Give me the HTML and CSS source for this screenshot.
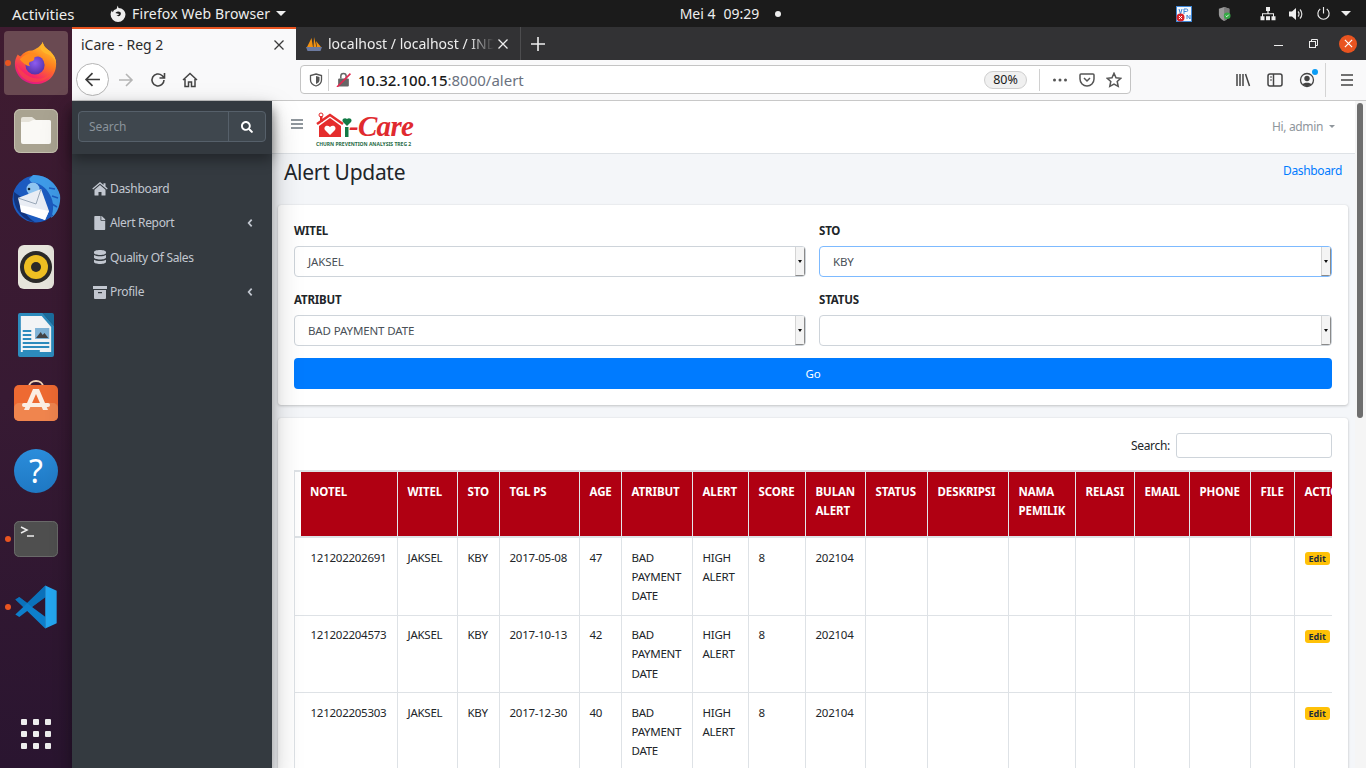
FILE: index.html
```html
<!DOCTYPE html>
<html lang="id">
<head>
<meta charset="utf-8">
<title>iCare - Reg 2</title>
<link rel="stylesheet" href="styles.css">
</head>
<body>
<header class="topbar">
  <div class="top-left">
    <span class="activities">Activities</span>
    <span class="app-menu">
      <svg class="ff-mono" viewBox="0 0 16 16"><path fill="#eee" d="M8 .5c.6 1 .8 1.600.9 2.300C12.700 3 15.500 5.500 15.500 9A7 7 0 0 1 1.500 9c0-1.500.5-3 1.400-4.100 0 1 .3 1.600.8 2C4 5 5.500 4 7 3.700 7.500 2.800 8 1.800 8 .5zM8.500 6A3 3 0 0 0 6 7.500c1 .7 2.500.3 3.500 1-.3.9-1.200 1.300-2.300 1 .5 1 2 1.400 3 .7 1-.8 1.300-2.300.6-3.300-.5-.6-1.300-.9-2.300-.9z"/></svg>
      <span class="app-name">Firefox Web Browser</span>
      <i class="caret-w"></i>
    </span>
  </div>
  <div class="top-center"><span>Mei 4</span><span>09:29</span><i class="rec-dot"></i></div>
  <div class="top-right">
    <svg class="tray vpn" viewBox="0 0 16 16"><rect width="16" height="16" fill="#f4f8fd"/><rect x=".5" y=".5" width="15" height="15" fill="none" stroke="#3d86d6"/><path d="M3 3l1.500 5L6 3M8 8V3h2.500a1.200 1.200 0 0 1 0 2.500H8M11 13V9l3 4V9" fill="none" stroke="#3d86d6" stroke-width="1"/><circle cx="4.500" cy="11.500" r="4" fill="#d8232a"/><path d="M3 10l3 3M6 10l-3 3" stroke="#fff" stroke-width="1"/></svg>
    <svg class="tray shield" viewBox="0 0 16 16"><path d="M7 0l6 2v6c0 4-3 6.500-6 8-3-1.500-6-4-6-8V2z" fill="#9a9a9a"/><path d="M7 0l6 2v6c0 4-3 6.500-6 8z" fill="#7d7d7d"/><circle cx="10.500" cy="10" r="3.800" fill="#35a845"/><path d="M8.800 10l1.200 1.200 2.200-2.400" stroke="#fff" fill="none"/></svg>
    <svg class="tray net" viewBox="0 0 16 16"><path fill="#eee" d="M6 1h4v4H8.600v2.200H14v3h1.500v4h-4v-4H13V8.300H3v1.900h1.500v4h-4v-4H2v-3h5.400V5H6z"/><path fill="#eee" d="M6 10.200h4v4H6z"/></svg>
    <svg class="tray vol" viewBox="0 0 16 16"><path fill="#eee" d="M1 5.500h3L8 2v12L4 10.500H1z"/><path d="M10 5.500a3.500 3.500 0 0 1 0 5M12 3.500a6.500 6.500 0 0 1 0 9" fill="none" stroke="#ddd" stroke-width="1.200"/></svg>
    <svg class="tray pow" viewBox="0 0 16 16"><path d="M8 1v7M4.500 3.200a6 6 0 1 0 7 0" fill="none" stroke="#eee" stroke-width="1.200"/></svg>
    <i class="caret-w"></i>
  </div>
</header>

<div class="desktop">
  <nav class="dock">
    <div class="slot active-tile">
      <i class="run-dot"></i>
      <svg class="ic46" viewBox="0 0 48 48">
        <defs>
          <linearGradient id="fxa" x1=".8" y1="0" x2=".3" y2="1"><stop offset="0" stop-color="#ffd12e"/><stop offset=".45" stop-color="#ff7a1f"/><stop offset=".8" stop-color="#f5256a"/><stop offset="1" stop-color="#d81b8a"/></linearGradient>
          <radialGradient id="fxb" cx=".5" cy=".4" r=".7"><stop offset="0" stop-color="#8d5cf0"/><stop offset="1" stop-color="#4c2a9e"/></radialGradient>
        </defs>
        <path fill="url(#fxa)" d="M31 2c1 5 4 7 8 10 4 4 6 8 6 13 0 12-9 21-21 21S2 37 2 25c0-4 1-7 3-10 1 1 2 2 3 2 3-4 7-6 12-6 4-2 9-4 11-9z"/>
        <path fill="#ffb52a" d="M31 2c1 5 4 7 8 10 4 4 6 8 6 13-1-5-4-8-8-10-4-1-7-3-8-6 0-2 1-5 2-7z"/>
        <circle cx="23" cy="26" r="10" fill="url(#fxb)"/>
        <path fill="#ff8a1f" d="M7 20c4-4 9-7 15-6 3 .5 6 2 8 4-3-1-6-1-8 .5 1 2-1 3.500-3 4-3 .5-3 3-1 5-5-1-8-4-11-7.500z"/>
        <path fill="#ff5a2c" d="M4 26c0 9 8 18 19 18 9 0 16-6 18-12-4 6-10 9-17 8-8-1-14-6-20-14z" opacity=".45"/>
      </svg>
    </div>
    <div class="slot">
      <svg class="ic44" viewBox="0 0 44 44"><rect width="44" height="44" rx="6" fill="#a9a391"/><rect x=".5" y=".5" width="43" height="43" rx="6" fill="none" stroke="#c4bfae"/><path fill="#e6e3da" d="M7 10a2 2 0 0 1 2-2h9l4 3h13a2 2 0 0 1 2 2v2H7z"/><path fill="#faf9f6" d="M7 13h8l4-2h16a2 2 0 0 1 2 2v20a2 2 0 0 1-2 2H9a2 2 0 0 1-2-2z"/></svg>
    </div>
    <div class="slot">
      <svg class="ic50" viewBox="0 0 50 50"><circle cx="25" cy="25" r="23.500" fill="#1c5bc0"/><path fill="#3f9be8" d="M22 1c12-1 24 8 27 20 1 8-2 18-9 23 3-8 3-16-1-23C35 13 29 9 20 8l-2-3z"/><path fill="#12357f" d="M3 18C1 30 8 45 25 49c-10-6-15-15-15-26z"/><path d="M38 14l6 1M41 22l6 2M41 30l5 3M37 38l5 4" stroke="#1c5bc0" stroke-width="1.500"/><circle cx="22" cy="15" r="6.500" fill="#8fc5f0"/><circle cx="18" cy="15" r="1.300" fill="#123"/><path fill="#e9edf4" d="M7 24l23-9 8 22-4 9-24-10z"/><path fill="#fff" d="M9 31l29 6-4 9-24-8z"/><path d="M7 24l18 6 5-15" fill="none" stroke="#9aa8b8"/></svg>
    </div>
    <div class="slot">
      <svg class="ic44" viewBox="0 0 44 44"><rect x="4" width="36" height="44" rx="6" fill="#e7e5dc"/><circle cx="22" cy="22" r="16" fill="#2b2a28"/><circle cx="22" cy="22" r="12" fill="#eebf22"/><circle cx="22" cy="22" r="5" fill="#2b2a28"/></svg>
    </div>
    <div class="slot">
      <svg class="writer" viewBox="4 0 38 44" preserveAspectRatio="none"><path fill="#1b6e9e" d="M30 0h10a2 2 0 0 1 2 2v11z"/><path fill="#2c8bbd" d="M6 0h24l12 13v29a2 2 0 0 1-2 2H6a2 2 0 0 1-2-2V2a2 2 0 0 1 2-2z"/><path fill="#f2f4f6" d="M7 3h22l10 11v25H7z"/><path stroke="#2c8bbd" stroke-width="2" d="M9 18h9M9 22h9M9 26h9M9 30h28M9 34h28M9 38h18"/><rect x="22" y="15" width="15" height="11" fill="#7fb3d6"/><path fill="#444" d="M23 25l5-6 2 3 2-2 4 5z"/></svg>
    </div>
    <div class="slot">
      <svg class="software" viewBox="0 0 44 44"><path d="M15 8c0-8 14-8 14 0" fill="none" stroke="#f1d3b4" stroke-width="2"/><rect y="6" width="44" height="36" rx="5" fill="#ee6a32"/><rect y="24" width="44" height="18" rx="5" fill="#f0854e"/><path fill="#fbeee4" d="M19 10h6l9 21h-5l-7-16-7 16h-5z"/><rect x="8" y="24" width="28" height="4" rx="2" fill="#fbeee4"/></svg>
    </div>
    <div class="slot">
      <div class="help-ball">?</div>
    </div>
    <div class="slot">
      <i class="run-dot"></i>
      <svg class="ic44" viewBox="0 0 44 36"><rect width="44" height="36" rx="5" fill="#4f4f4f"/><rect x=".5" y=".5" width="43" height="35" rx="5" fill="none" stroke="#6a6a6a"/><path d="M7 6l6 3-6 3M13 15h7" fill="none" stroke="#eee" stroke-width="1.500"/></svg>
    </div>
    <div class="slot">
      <i class="run-dot"></i>
      <svg class="ic44" viewBox="0 0 100 100"><path fill="#0e7fcc" d="M71 1L30 41 12 27l-9 6 18 17L3 67l9 6 18-14 41 40V72L41 50l30-22z"/><path fill="#0a68ad" d="M12 27l-9 6 18 17 9-9zM30 41L71 1v27L41 50z" opacity=".55"/><path fill="#24a7f2" d="M71 1l26 12v74L71 99z"/></svg>
    </div>
    <div class="apps"><i></i><i></i><i></i><i></i><i></i><i></i><i></i><i></i><i></i></div>
  </nav>

  <div class="window">
    <div class="tabbar">
      <div class="tab tab-active"><span class="tab-title">iCare - Reg 2</span><svg class="x" viewBox="0 0 12 12"><path d="M1.500 1.500l9 9M10.500 1.500l-9 9" stroke="#3b3b3b" stroke-width="1.300"/></svg></div>
      <div class="tab tab-idle">
        <svg class="pma" viewBox="0 0 16 16"><path fill="#f29111" d="M1 11L5.500 2 7 11zM7.500 11L8 1l2.500 10zM11 11l-1-6 5 6z"/><path fill="#6c7aa0" d="M0 11h16l-1.500 4H1.500z"/></svg>
        <span class="tab-title-idle">localhost / localhost / INDEX</span>
        <svg class="x" viewBox="0 0 12 12"><path d="M1.500 1.500l9 9M10.500 1.500l-9 9" stroke="#eee" stroke-width="1.300"/></svg>
      </div>
      <svg class="plus" viewBox="0 0 14 14"><path d="M7 0v14M0 7h14" stroke="#eee" stroke-width="1.600"/></svg>
      <div class="winctl">
        <i class="min"></i>
        <svg class="restore" viewBox="0 0 9 9"><path d="M2.500 2V.5h6v6H7" fill="none" stroke="#eee"/><rect x=".5" y="2.500" width="6" height="6" fill="none" stroke="#eee"/></svg>
        <span class="close-btn"><svg viewBox="0 0 10 10"><path d="M1 1l8 8M9 1l-8 8" stroke="#fff" stroke-width="1.300"/></svg></span>
      </div>
    </div>

    <div class="toolbar">
      <span class="back"><svg viewBox="0 0 16 16"><path d="M15 8H2M8 2L2 8l6 6" fill="none" stroke="#3b3b3b" stroke-width="1.600"/></svg></span>
      <svg class="tb" viewBox="0 0 16 16"><path d="M1 8h13M8 2l6 6-6 6" fill="none" stroke="#b5b5b5" stroke-width="1.600"/></svg>
      <svg class="tb" viewBox="0 0 16 16"><path d="M14 8a6 6 0 1 1-2-4.500L14 5.500M14.500 1v5h-5" fill="none" stroke="#444" stroke-width="1.600"/></svg>
      <svg class="tb" viewBox="0 0 16 16"><path d="M1 8l7-6.500L15 8M3 7v7.500h3.500V10h3v4.500H13V7" fill="none" stroke="#444" stroke-width="1.500"/></svg>
      <div class="urlbar">
        <svg class="u-shield" viewBox="0 0 14 14"><path d="M7 1l5.500 1.500V7c0 3-2.500 5-5.500 6C4 12 1.500 10 1.500 7V2.500z" fill="none" stroke="#555" stroke-width="1.300"/><path d="M7 3l3.500 1v3c0 2-1.500 3.300-3.500 4z" fill="#555"/></svg>
        <i class="u-sep"></i>
        <svg class="u-lock" viewBox="0 0 14 14"><rect x="2" y="6" width="10" height="7.500" rx="1" fill="#666"/><path d="M4.500 6V4a2.500 2.500 0 0 1 5 0v2" fill="none" stroke="#666" stroke-width="1.400"/><path d="M1 14L13.500 1.500" stroke="#e22850" stroke-width="1.600"/></svg>
        <span class="url"><b>10.32.100.15</b>:8000/alert</span>
        <span class="zoom-pill">80%</span>
        <i class="u-sep u-sep2"></i>
        <svg class="u-ic dots" viewBox="0 0 16 16"><circle cx="2.500" cy="8" r="1.500"/><circle cx="8" cy="8" r="1.500"/><circle cx="13.500" cy="8" r="1.500"/></svg>
        <svg class="u-ic" viewBox="0 0 16 16"><path d="M1 3a1 1 0 0 1 1-1h12a1 1 0 0 1 1 1v4a7 7 0 0 1-14 0z" fill="none" stroke="#555" stroke-width="1.500"/><path d="M5 6l3 3 3-3" fill="none" stroke="#555" stroke-width="1.500"/></svg>
        <svg class="u-ic" viewBox="0 0 16 16"><path d="M8 1.300l2 4.500 4.800.5-3.600 3.200 1 4.800L8 12l-4.200 2.300 1-4.800L1.200 6.300 6 5.800z" fill="none" stroke="#555" stroke-width="1.500"/></svg>
      </div>
      <div class="tools-right">
        <svg class="tb" viewBox="0 0 16 16"><path d="M2 2v12M5 2v12M8 2v12M10.500 2l4 12" fill="none" stroke="#444" stroke-width="1.500"/></svg>
        <svg class="tb" viewBox="0 0 16 16"><rect x="1" y="2" width="14" height="12" rx="2" fill="none" stroke="#444" stroke-width="1.500"/><path d="M6.500 2v12" stroke="#444" stroke-width="1.500"/><path d="M3 5h2M3 8h2" stroke="#444"/></svg>
        <span class="acct"><svg class="tb" viewBox="0 0 16 16"><circle cx="8" cy="8" r="6.500" fill="none" stroke="#444" stroke-width="1.300"/><circle cx="8" cy="6.500" r="2.700" fill="#444"/><path d="M3.500 12.500c1-2.500 8-2.500 9 0-2 2-7 2-9 0z" fill="#444"/></svg><i class="acct-dot"></i></span>
        <i class="tb-sep"></i>
        <svg class="tb" viewBox="0 0 16 16"><path d="M2 3h12M2 8h12M2 13h12" stroke="#444" stroke-width="1.700"/></svg>
      </div>
    </div>

    <div class="viewport">
      <aside class="sidebar">
        <div class="side-search">
          <div class="side-input"><span class="side-ph">Search</span><span class="side-btn"><svg viewBox="0 0 512 512"><path fill="#fff" d="M505 442.700L405.300 343c-4.500-4.500-10.600-7-17-7H372c27.600-35.300 44-79.700 44-128C416 93.100 322.900 0 208 0S0 93.100 0 208s93.100 208 208 208c48.300 0 92.700-16.400 128-44v16.300c0 6.400 2.500 12.500 7 17l99.700 99.700c9.400 9.400 24.600 9.400 33.900 0l28.300-28.300c9.400-9.400 9.400-24.600.1-34zM208 336c-70.700 0-128-57.200-128-128 0-70.700 57.200-128 128-128 70.700 0 128 57.200 128 128 0 70.700-57.200 128-128 128z"/></svg></span></div>
        </div>
        <ul class="menu">
          <li><svg class="mi" viewBox="0 0 16 14"><path fill="#c2c7d0" d="M8 3L2.500 7.700V13a.5.500 0 0 0 .5.500h3.500V10h3v3.500H13a.5.500 0 0 0 .5-.5V7.700zM15.700 6.500L13.500 4.600V1.200h-2v1.700L8 0 .3 6.500l.8 1L8 1.800l6.900 5.700z"/></svg><span>Dashboard</span></li>
          <li><svg class="mi" viewBox="0 0 16 14"><path fill="#c2c7d0" d="M8.500 4V0H3a.7.700 0 0 0-.7.700v12.600c0 .4.300.7.700.7h9.500a.7.700 0 0 0 .7-.7V4.700H9.200a.7.700 0 0 1-.7-.7zM13.200 3.300L10 .2A.7.700 0 0 0 9.500 0h-.2v3.900h3.900z"/></svg><span>Alert Report</span><svg class="chev" viewBox="0 0 8 12"><path d="M6.500 1L2 6l4.500 5" fill="none" stroke="#c2c7d0" stroke-width="2.600"/></svg></li>
          <li><svg class="mi" viewBox="0 0 16 14"><path fill="#c2c7d0" d="M14 2v1c0 1.100-2.700 2-6 2S2 4.100 2 3V2C2 .9 4.700 0 8 0s6 .9 6 2zM14 5v2.500C14 8.600 11.300 9.500 8 9.500S2 8.600 2 7.500V5c1.300.9 3.600 1.300 6 1.300S12.700 5.900 14 5zM14 9.700V12c0 1.100-2.700 2-6 2s-6-.9-6-2V9.700c1.300.9 3.600 1.300 6 1.300s4.700-.4 6-1.300z"/></svg><span>Quality Of Sales</span></li>
          <li><svg class="mi" viewBox="0 0 16 14"><path fill="#c2c7d0" d="M1 1h14v3H1zM2 5h12v8a1 1 0 0 1-1 1H3a1 1 0 0 1-1-1zm4 2v1.200h4V7z"/></svg><span>Profile</span><svg class="chev" viewBox="0 0 8 12"><path d="M6.500 1L2 6l4.500 5" fill="none" stroke="#c2c7d0" stroke-width="2.600"/></svg></li>
        </ul>
      </aside>

      <main class="main">
        <div class="navbar">
          <svg class="burger" viewBox="0 0 12 10"><path d="M0 1h12M0 5h12M0 9h12" stroke="#6c757d" stroke-width="1.400"/></svg>
          <div class="logo">
            <div class="logo-row">
              <svg class="logo-house" viewBox="0 0 36 27"><path d="M1 12L14 3l13 9" fill="none" stroke="#e52d2d" stroke-width="2.500"/><circle cx="5" cy="3" r="2" fill="none" stroke="#e52d2d"/><path fill="#e52d2d" d="M4 4h2.500v6H4z"/><path fill="#e52d2d" d="M3 14l11-8 11 8v11H3z"/><path fill="#fff" d="M14 23l-5-5c-2-3 2-6 5-3 3-3 7 0 5 3z"/><path fill="#127a45" d="M29 15h3.500v10H29z"/><path fill="#127a45" d="M31 14l-4-4c-2-3 2-5 4-3 2-2 6 0 4 3z"/></svg>
              <span class="logo-text">-Care</span>
            </div>
            <div class="logo-tag">CHURN PREVENTION ANALYSIS TREG 2</div>
          </div>
          <div class="user">Hi, admin<i class="caret-g"></i></div>
        </div>

        <div class="content">
          <div class="head-row">
            <h1>Alert Update</h1>
            <a class="crumb" href="#">Dashboard</a>
          </div>

          <section class="card form-card">
            <div class="form-grid">
              <div class="field"><label>WITEL</label><div class="select"><span>JAKSEL</span><i class="arrow"></i></div></div>
              <div class="field"><label>STO</label><div class="select focus"><span>KBY</span><i class="arrow"></i></div></div>
              <div class="field"><label>ATRIBUT</label><div class="select"><span>BAD PAYMENT DATE</span><i class="arrow"></i></div></div>
              <div class="field"><label>STATUS</label><div class="select"><span></span><i class="arrow"></i></div></div>
            </div>
            <button class="go" type="button">Go</button>
          </section>

          <section class="card table-card">
            <div class="dt-search"><label>Search:</label><span class="dt-input"></span></div>
            <div class="table-wrap">
              <table class="grid">
                <thead>
                  <tr><th>NOTEL</th><th>WITEL</th><th>STO</th><th>TGL PS</th><th>AGE</th><th>ATRIBUT</th><th>ALERT</th><th>SCORE</th><th>BULAN ALERT</th><th>STATUS</th><th>DESKRIPSI</th><th>NAMA PEMILIK</th><th>RELASI</th><th>EMAIL</th><th>PHONE</th><th>FILE</th><th>ACTION</th></tr>
                </thead>
                <tbody>
                  <tr><td>121202202691</td><td>JAKSEL</td><td>KBY</td><td>2017-05-08</td><td>47</td><td>BAD PAYMENT DATE</td><td>HIGH ALERT</td><td>8</td><td>202104</td><td></td><td></td><td></td><td></td><td></td><td></td><td></td><td><span class="badge">Edit</span></td></tr>
                  <tr><td>121202204573</td><td>JAKSEL</td><td>KBY</td><td>2017-10-13</td><td>42</td><td>BAD PAYMENT DATE</td><td>HIGH ALERT</td><td>8</td><td>202104</td><td></td><td></td><td></td><td></td><td></td><td></td><td></td><td><span class="badge">Edit</span></td></tr>
                  <tr><td>121202205303</td><td>JAKSEL</td><td>KBY</td><td>2017-12-30</td><td>40</td><td>BAD PAYMENT DATE</td><td>HIGH ALERT</td><td>8</td><td>202104</td><td></td><td></td><td></td><td></td><td></td><td></td><td></td><td><span class="badge">Edit</span></td></tr>
                </tbody>
              </table>
            </div>
          </section>
        </div>
      </main>

      <div class="scrollbar"><div class="thumb"></div></div>
    </div>
  </div>
</div>
</body>
</html>
```
FILE: styles.css
```css
* { box-sizing: border-box; }
html, body { margin: 0; height: 100%; }
body { width: 1366px; height: 768px; overflow: hidden; display: flex; flex-direction: column; font-family: "Noto Sans", sans-serif; background: #000; }
i { display: block; }

/* GNOME top bar */
.topbar { height: 27px; flex: none; background: #1b1b1b; color: #eee; font-size: 14px; display: grid; grid-template-columns: 1fr auto 1fr; align-items: center; padding: 0 0 0 12px; }
.top-left { display: flex; align-items: center; }
.activities { width: 97px; font-size: 15px; }
.app-menu { display: flex; align-items: center; gap: 6px; }
.app-name { letter-spacing: .15px; }
.ff-mono { width: 17px; height: 17px; }
.caret-w { width: 0; height: 0; border-left: 5px solid transparent; border-right: 5px solid transparent; border-top: 5px solid #eee; }
.top-center { display: flex; align-items: center; gap: 8px; margin-left: 83px; }
.rec-dot { width: 6px; height: 6px; border-radius: 50%; background: #eee; margin-left: 8px; }
.top-right { display: flex; align-items: center; justify-content: flex-end; padding-right: 15px; }
.tray { display: block; }
.vpn { width: 16px; height: 16px; margin-right: 26px; }
.shield { width: 14px; height: 16px; margin-right: 28px; }
.net { width: 16px; height: 16px; margin-right: 12px; }
.vol { width: 16px; height: 16px; margin-right: 12px; }
.pow { width: 15px; height: 15px; margin-right: 10px; }

/* Dock */
.desktop { flex: 1; display: flex; min-height: 0; }
.dock { width: 72px; flex: none; background: linear-gradient(180deg, #3f1b30 0%, #371a33 50%, #2a1530 100%); display: flex; flex-direction: column; align-items: center; padding-top: 2px; }
.slot { width: 64px; height: 68px; flex: none; display: flex; align-items: center; justify-content: center; position: relative; }
.active-tile { height: 64px; margin: 2px 0; background: #6a4a52; border-radius: 4px; }
.run-dot { position: absolute; left: 1px; top: 50%; width: 6px; height: 6px; margin-top: -3px; border-radius: 50%; background: #e95420; }
.ic46 { width: 46px; height: 46px; }
.ic44 { width: 44px; height: 44px; }
.ic50 { width: 50px; height: 50px; }
.writer { width: 36px; height: 44px; }
.software { width: 44px; height: 44px; margin-top: -4px; }
.help-ball { width: 44px; height: 44px; border-radius: 50%; background: linear-gradient(180deg, #2b8ddb, #1f79c4); color: #fff; font-size: 32px; line-height: 44px; text-align: center; }
.apps { margin-top: auto; margin-bottom: 19px; display: grid; grid-template-columns: repeat(3, 6px); gap: 6px; }
.apps i { width: 6px; height: 6px; border-radius: 1px; background: #eee; }

/* Firefox window */
.window { flex: 1; min-width: 0; display: flex; flex-direction: column; }
.tabbar { height: 33px; flex: none; background: #323234; display: flex; align-items: stretch; color: #eee; font-size: 14px; }
.tab { display: flex; align-items: center; }
.tab-active { width: 224px; background: #f9f9fa; color: #2b2b2b; border-top: 2px solid #e95420; padding: 0 11px 0 9px; justify-content: space-between; font-size: 14px; }
.tab-idle { width: 225px; padding: 0 11px 0 10px; border-right: 1px solid #4d4d4f; }
.x { width: 12px; height: 12px; flex: none; }
.pma { width: 16px; height: 16px; margin-right: 6px; flex: none; }
.tab-title-idle { width: 172px; overflow: hidden; white-space: nowrap; margin-right: 3px; -webkit-mask-image: linear-gradient(90deg, #000 85%, transparent 100%); mask-image: linear-gradient(90deg, #000 85%, transparent 100%); }
.plus { width: 14px; height: 14px; align-self: center; margin-left: 10px; }
.winctl { margin-left: auto; display: flex; align-items: center; padding-right: 9px; }
.min { width: 9px; height: 1px; background: #eee; margin-top: 3px; margin-right: 26px; }
.restore { width: 9px; height: 9px; margin-right: 21px; }
.close-btn { width: 18px; height: 18px; border-radius: 50%; background: #e95420; display: flex; align-items: center; justify-content: center; }
.close-btn svg { width: 9px; height: 9px; }

.toolbar { height: 41px; flex: none; background: #f9f9fa; border-bottom: 1px solid #c8c8c8; display: flex; align-items: center; padding: 0 11px 1px 4px; }
.tb { width: 16px; height: 16px; display: block; flex: none; }
.back { width: 33px; height: 33px; border: 1px solid #b5b5b5; border-radius: 50%; background: #fff; display: flex; align-items: center; justify-content: center; margin-right: 9px; }
.back svg { width: 17px; height: 17px; }
.toolbar > .tb + .tb { margin-left: 16px; }
.urlbar { width: 831px; height: 29px; margin-left: 102px; background: #fff; border: 1px solid #c4c4c4; border-radius: 4px; display: flex; align-items: center; padding: 0 8px 0 8px; color: #222; }
.u-shield { width: 14px; height: 14px; margin-right: 5px; }
.u-sep { width: 1px; height: 22px; background: #d0d0d0; }
.u-lock { width: 15px; height: 15px; margin: 0 7px 0 7px; }
.url { font-size: 15px; color: #6b7280; flex: 1; white-space: nowrap; }
.url b { font-weight: 500; color: #1a1a1a; }
.zoom-pill { width: 43px; height: 18px; border: 1px solid #cfcfcf; border-radius: 9px; background: #f0f0f0; font-size: 12.500px; line-height: 16px; text-align: center; color: #1a1a1a; margin-right: 12px; }
.u-sep2 { margin-right: 12px; }
.u-ic { width: 16px; height: 16px; display: block; margin-left: 11px; }
.dots { width: 16px; margin-left: 0; fill: #555; }
.tools-right { margin-left: auto; display: flex; align-items: center; gap: 16px; }
.acct { position: relative; display: block; }
.acct-dot { position: absolute; right: -3px; top: -3px; width: 6px; height: 6px; border-radius: 50%; background: #0a9cf5; }
.tb-sep { width: 1px; height: 34px; background: #d4d4d4; margin: 0 -3px 0 -6px; }

/* Page */
.viewport { flex: 1; min-height: 0; display: flex; background: #fff; }
.sidebar { width: 200px; flex: none; background: #343a40; position: relative; z-index: 2; box-shadow: 0 14px 28px rgba(0,0,0,.25), 0 10px 10px rgba(0,0,0,.22); color: #c2c7d0; }
.side-search { height: 53px; background: #343a40; padding: 10px 6px; box-shadow: 0 6px 12px rgba(0,0,0,.35); }
.side-input { height: 31px; display: flex; background: #3f474e; border: 1px solid #56606a; border-radius: 4px; align-items: stretch; }
.side-ph { flex: 1; font-size: 12px; line-height: 29px; color: #8a939b; padding-left: 10px; letter-spacing: -.1px; }
.side-btn { width: 37px; border-left: 1px solid #56606a; display: flex; align-items: center; justify-content: center; }
.side-btn svg { width: 12px; height: 12px; }
.menu { list-style: none; margin: 0; padding: 17.400px 0 0 0; }
.menu li { height: 34.400px; display: flex; align-items: center; padding: 0 19px 0 20px; font-size: 12px; letter-spacing: -.32px; }
.mi { width: 16px; height: 14px; margin-right: 2px; flex: none; }
.chev { width: 6px; height: 8px; margin-left: auto; }

.main { flex: 1; min-width: 0; background: #f4f6f9; display: flex; flex-direction: column; overflow: hidden; }
.navbar { height: 53px; flex: none; background: #fff; border-bottom: 1px solid #dee2e6; display: flex; align-items: center; padding: 0 20px 0 19px; }
.burger { width: 12px; height: 10px; margin: 0 13px 7px 0; flex: none; }
.logo { width: 96px; height: 39px; display: flex; flex-direction: column; margin-top: 3px; }
.logo-row { display: flex; align-items: flex-end; height: 30px; }
.logo-house { width: 36px; height: 27px; flex: none; }
.logo-text { flex: none; white-space: nowrap; font-family: "Liberation Serif", serif; font-style: italic; font-weight: 700; color: #e02a2f; font-size: 29px; line-height: 34px; height: 30px; letter-spacing: -.7px; margin-left: -3px; }
.logo-tag { font-size: 5px; font-weight: 700; color: #1f6a45; white-space: nowrap; line-height: 7px; margin-top: 2px; }
.user { margin-left: auto; color: #8f969c; font-size: 12px; letter-spacing: -.35px; display: flex; align-items: center; margin-bottom: 2px; }
.caret-g { width: 0; height: 0; border-left: 3.500px solid transparent; border-right: 3.500px solid transparent; border-top: 3.500px solid #8f969c; margin-left: 6px; }

.content { flex: 1; min-height: 0; padding: 0 7px 0 6px; }
.head-row { height: 51px; display: flex; align-items: flex-start; justify-content: space-between; padding: 5px 6px 0 6px; }
h1 { margin: 0; font-weight: 400; font-size: 21px; line-height: 26px; color: #212529; letter-spacing: -.3px; }
.crumb { font-size: 12px; color: #007bff; text-decoration: none; letter-spacing: -.35px; line-height: 20px; margin-top: 2px; }

.card { background: #fff; border-radius: 3px; box-shadow: 0 0 1px rgba(0,0,0,.125), 0 1px 3px rgba(0,0,0,.2); padding: 16px; }
.form-card { height: 200px; margin-bottom: 13px; }
.form-grid { display: grid; grid-template-columns: 512px 513px; column-gap: 13px; row-gap: 13px; }
.field label { display: block; font-size: 11.500px; font-weight: 700; line-height: 19px; color: #212529; letter-spacing: -.2px; margin-bottom: 6px; }
.select { height: 31px; border: 1px solid #ced4da; border-radius: 4px; display: flex; align-items: stretch; font-size: 11.500px; color: #495057; letter-spacing: -.12px; background: #fff; overflow: hidden; }
.select span { flex: 1; line-height: 29px; padding-left: 13px; }
.select .arrow { width: 10px; flex: none; background: #f4f4f4; border-left: 1px solid #d4d4d4; border-bottom: 1px solid #8a8a8a; box-shadow: inset -1px 0 0 #8a8a8a; position: relative; }
.select .arrow::after { content: ""; position: absolute; left: 2px; top: 13px; border-left: 2.500px solid transparent; border-right: 2.500px solid transparent; border-top: 3px solid #111; }
.select.focus { border-color: #7dbaff; }
.go { display: block; width: 100%; height: 31px; margin-top: 12px; border: 0; border-radius: 4px; background: #007bff; color: #fff; font: 11.500px "Noto Sans", sans-serif; letter-spacing: -.2px; }

.table-card { height: 400px; padding-top: 15px; }
.dt-search { display: flex; justify-content: flex-end; align-items: center; height: 25px; font-size: 12px; letter-spacing: -.3px; color: #212529; margin-bottom: 12px; }
.dt-input { width: 156px; height: 25px; border: 1px solid #ced4da; border-radius: 3px; margin-left: 6px; }
.table-wrap { overflow: hidden; }
.grid { border-collapse: separate; border-spacing: 0; table-layout: fixed; width: 1060px; font-size: 11.500px; color: #212529; letter-spacing: -.25px; }
.grid th { background: #b00012 padding-box; color: #fff; font-weight: 700; text-align: left; vertical-align: top; line-height: 19.200px; padding: 10px 9px 15.600px 9.500px; border-top: 2px solid #dee2e6; border-bottom: 2px solid #dee2e6; border-right: 1px solid #e3e6ea; letter-spacing: -.1px; }
.grid th:first-child { background: linear-gradient(90deg, #dee2e6 1px, #fff 1px, #fff 7px, #b00012 7px) padding-box; padding-left: 16px; }
.grid td { vertical-align: top; line-height: 19.200px; padding: 9.500px 9px 9.500px 9.500px; border-right: 1px solid #dee2e6; border-bottom: 1px solid #dee2e6; }
.grid td:first-child { border-left: 1px solid #dee2e6; padding-left: 15.500px; }
.grid th:nth-child(1), .grid td:nth-child(1) { width: 104px; }
.grid th:nth-child(2) { width: 60px; }
.grid th:nth-child(3) { width: 42px; }
.grid th:nth-child(4) { width: 80px; }
.grid th:nth-child(5) { width: 42px; }
.grid th:nth-child(6) { width: 71px; }
.grid th:nth-child(7) { width: 56px; }
.grid th:nth-child(8) { width: 57px; }
.grid th:nth-child(9) { width: 60px; }
.grid th:nth-child(10) { width: 62px; }
.grid th:nth-child(11) { width: 81px; }
.grid th:nth-child(12) { width: 67px; }
.grid th:nth-child(13) { width: 59px; }
.grid th:nth-child(14) { width: 55px; }
.grid th:nth-child(15) { width: 61px; }
.grid th:nth-child(16) { width: 44px; }
.grid th:nth-child(17) { width: 60px; white-space: nowrap; }
.badge { display: inline-block; background: #ffc107; color: #1f2d3d; font-size: 9px; font-weight: 700; line-height: 13px; height: 13px; padding: 0 4px; border-radius: 3px; letter-spacing: 0; vertical-align: top; margin-top: 4.500px; }

.scrollbar { width: 11px; flex: none; background: #f5f5f5; padding: 2px 3px 0 2px; }
.thumb { height: 315px; border-radius: 3px; background: #6e6e6e; }
```
